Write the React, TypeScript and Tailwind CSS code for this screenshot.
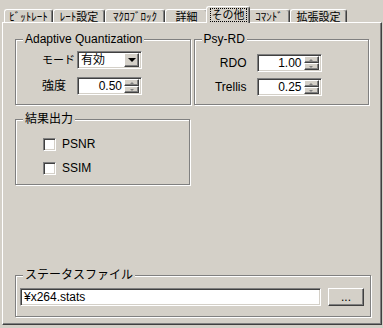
import { ReactNode } from "react";

const font = "font-['Liberation_Sans','Noto_Sans_CJK_JP',sans-serif]";

const Group = ({
  label,
  className,
  children,
}: {
  label: string;
  className: string;
  children?: ReactNode;
}) => (
  <div
    className={`relative border border-[#808080] shadow-[1px_1px_0_#fff,inset_1px_1px_0_#fff] ${className}`}
  >
    <span className="absolute -top-[8px] left-[7px] whitespace-nowrap bg-[#d4d0c8] px-[2px] leading-[14px]">
      {label}
    </span>
    {children}
  </div>
);

const Sunken = ({ className, children }: { className: string; children?: ReactNode }) => (
  <div
    className={`flex items-center border border-t-[#808080] border-l-[#808080] border-b-white border-r-white bg-white shadow-[inset_1px_1px_0_#404040,inset_-1px_-1px_0_#d4d0c8] ${className}`}
  >
    {children}
  </div>
);

const SpinBtn = ({ up }: { up?: boolean }) => (
  <div className="flex h-[7px] w-[15px] items-center justify-center border border-t-white border-l-white border-b-[#404040] border-r-[#404040] bg-[#d4d0c8] shadow-[inset_-1px_-1px_0_#808080]">
    <div
      className={
        up
          ? "h-0 w-0 border-x-[2px] border-b-[2px] border-x-transparent border-b-[#808080]"
          : "h-0 w-0 border-x-[2px] border-t-[2px] border-x-transparent border-t-[#808080]"
      }
    />
  </div>
);

const Spin = ({ value }: { value: string }) => (
  <Sunken className="h-[18px] w-[65px] p-[2px]">
    <span className="flex-1 pr-[2px] text-right leading-[14px]">{value}</span>
    <div className="flex flex-col">
      <SpinBtn up />
      <SpinBtn />
    </div>
  </Sunken>
);

const Check = ({ label }: { label: string }) => (
  <div className="flex items-center gap-[6px]">
    <div className="h-[13px] w-[13px] border border-t-[#808080] border-l-[#808080] border-b-white border-r-white bg-white shadow-[inset_1px_1px_0_#404040,inset_-1px_-1px_0_#d4d0c8]" />
    <span className="leading-[14px]">{label}</span>
  </div>
);

const tabs = [
  { label: "ﾋﾞｯﾄﾚｰﾄ", w: "w-[49px]" },
  { label: "ﾚｰﾄ設定", w: "w-[52px]" },
  { label: "ﾏｸﾛﾌﾞﾛｯｸ", w: "w-[60px]" },
  { label: "詳細", w: "w-[43px]" },
  { label: "その他", w: "w-[44px]", active: true },
  { label: "ｺﾏﾝﾄﾞ", w: "w-[42px]" },
  { label: "拡張設定", w: "w-[57px]" },
];

export default function App() {
  return (
    <div className={`h-[328px] w-[383px] bg-[#d4d0c8] pl-[2px] text-[12px] text-black ${font}`}>
      <div className="flex h-[22px] items-end pl-[2px]">
        {tabs.map((t) =>
          t.active ? (
            <div
              key={t.label}
              className={`relative z-10 -mx-[2px] -mb-[1px] flex h-[17px] items-start justify-center rounded-t-[3px] border-l border-t border-r border-l-white border-t-white border-r-[#404040] bg-[#d4d0c8] pt-[1px] shadow-[inset_-1px_0_0_#808080] ${t.w}`}
            >
              <span className="whitespace-nowrap border border-dotted border-black px-[1px] text-[11px] leading-[12px]">
                {t.label}
              </span>
            </div>
          ) : (
            <div
              key={t.label}
              className={`flex h-[13px] items-start justify-center whitespace-nowrap rounded-t-[3px] border-l border-t border-r border-l-white border-t-white border-r-[#404040] pt-[1px] shadow-[inset_-1px_0_0_#808080] text-[11px] leading-[12px] ${t.w}`}
            >
              {t.label}
            </div>
          ),
        )}
      </div>
      <div className="flex h-[303px] w-[380px] flex-col border border-t-white border-l-white border-b-[#404040] border-r-[#404040] px-[12px] pb-[7px] pt-[16px] shadow-[inset_-1px_-1px_0_#808080]">
        <div className="flex gap-[3px]">
          <Group label="Adaptive Quantization" className="h-[66px] w-[176px]">
            <div className="grid grid-cols-[35px_65px] items-center gap-y-[8px] pl-[26px] pt-[11px]">
              <span className="whitespace-nowrap text-[11px]">モード</span>
              <Sunken className="h-[18px] w-[65px] p-[2px]">
                <span className="flex-1 pl-[1px] leading-[14px]">有効</span>
                <div className="flex h-[14px] w-[15px] items-center justify-center border border-t-white border-l-white border-b-[#404040] border-r-[#404040] bg-[#d4d0c8] shadow-[inset_-1px_-1px_0_#808080]">
                  <div className="h-0 w-0 border-x-[4px] border-t-[4px] border-x-transparent border-t-black" />
                </div>
              </Sunken>
              <span className="whitespace-nowrap">強度</span>
              <Spin value="0.50" />
            </div>
          </Group>
          <Group label="Psy-RD" className="h-[66px] w-[176px]">
            <div className="grid grid-cols-[52px_65px] items-center gap-x-[10px] gap-y-[6px] pt-[14px]">
              <span className="text-right">RDO</span>
              <Spin value="1.00" />
              <span className="text-right">Trellis</span>
              <Spin value="0.25" />
            </div>
          </Group>
        </div>
        <Group label="結果出力" className="mt-[14px] h-[66px] w-[175px]">
          <div className="flex flex-col gap-[10px] pl-[27px] pt-[17px]">
            <Check label="PSNR" />
            <Check label="SSIM" />
          </div>
        </Group>
        <div className="flex-1" />
        <Group label="ステータスファイル" className="h-[42px] w-[356px]">
          <div className="flex gap-[7px] pl-[4px] pt-[12px]">
            <Sunken className="h-[18px] w-[301px] px-[3px]">
              <span className="leading-[14px]">¥x264.stats</span>
            </Sunken>
            <div className="flex h-[18px] w-[36px] items-center justify-center border border-t-white border-l-white border-b-[#404040] border-r-[#404040] shadow-[inset_-1px_-1px_0_#808080] leading-[10px]">
              ...
            </div>
          </div>
        </Group>
      </div>
    </div>
  );
}
